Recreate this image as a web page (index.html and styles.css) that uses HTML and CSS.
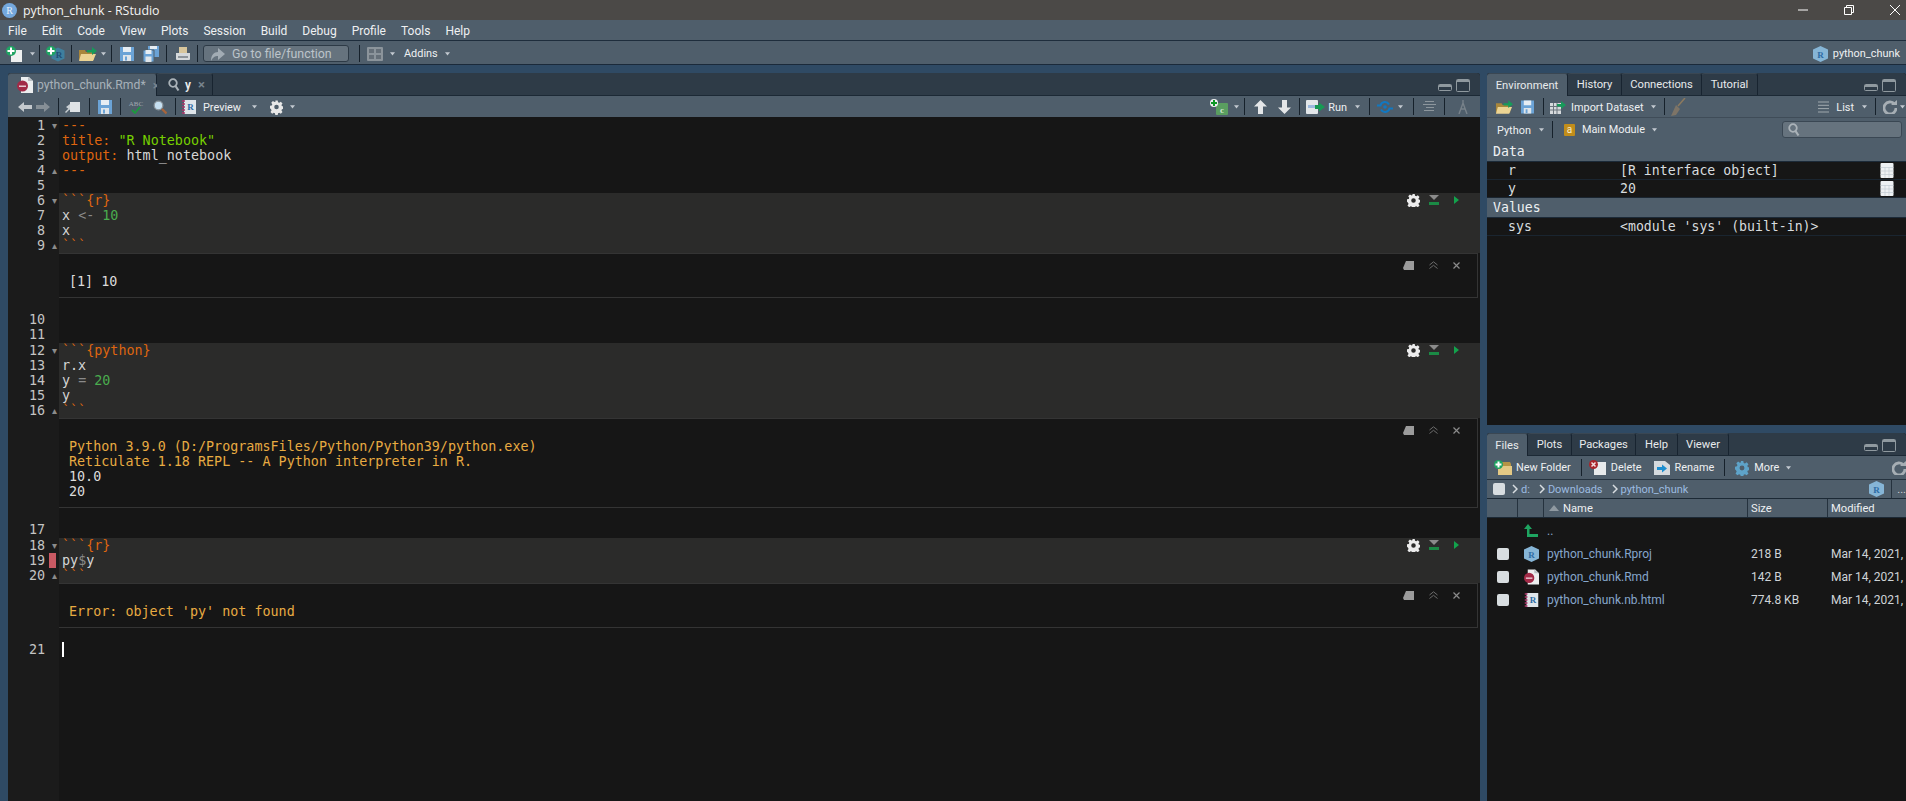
FILE: index.html
```html
<!DOCTYPE html>
<html lang="en">
<head>
<meta charset="utf-8">
<title>python_chunk - RStudio</title>
<link rel="stylesheet" href="styles.css">
</head>
<body>
<svg class="defs" aria-hidden="true">
  <symbol id="caret" viewBox="0 0 7 4"><path d="M1 .3h5L3.500 3.500z" fill="#c3cad0"/></symbol>
  <symbol id="docplus" viewBox="0 0 17 16"><path d="M5 4h11v12H5z" fill="#eef0f0"/><circle cx="5" cy="5" r="5" fill="#1fa463"/><path d="M4 1.500h2V4h2.500v2H6v2.500H4V6H1.500V4H4z" fill="#fff"/></symbol>
  <symbol id="projplus" viewBox="0 0 19 16"><path d="M12 1.500l6.500 3v8l-6.500 3-6.500-3v-8z" fill="#3f7f9e"/><circle cx="5" cy="5" r="5" fill="#1fa463"/><path d="M4 1.500h2V4h2.500v2H6v2.500H4V6H1.500V4H4z" fill="#fff"/></symbol>
  <symbol id="open" viewBox="0 0 19 16"><path d="M1 4h6l1 2h8v8H1z" fill="#a9873c"/><path d="M3 8h15l-3 7H1z" fill="#ecd493"/><path d="M9 4h5V1l5 4-5 4V6.500H9z" fill="#179a5a"/></symbol>
  <symbol id="save" viewBox="0 0 14 16"><path d="M0 1h14v14H0z" fill="#6ba3d6"/><path d="M3 1h8v5H3z" fill="#e6edf3"/><path d="M3 9h8v6H3z" fill="#dfe5ea"/><path d="M5 10.500h2v4H5z" fill="#6ba3d6"/></symbol>
  <symbol id="saveall" viewBox="0 0 16 16"><path d="M5 0h11v11H5z" fill="#6ba3d6"/><path d="M7 0h7v3H7z" fill="#e6edf3"/><path d="M0 4h11v12H0z" fill="#6ba3d6" stroke="#4f5e6b"/><path d="M2.500 4h6v4h-6z" fill="#e6edf3"/><path d="M2.500 10.500h6V16h-6z" fill="#dfe5ea"/></symbol>
  <symbol id="print" viewBox="0 0 16 16"><path d="M4 1h8v6H4z" fill="#d8c69c"/><path d="M1 7h14v6a1 1 0 0 1-1 1H2a1 1 0 0 1-1-1z" fill="#d4d8da"/><path d="M3 10h10v2H3z" fill="#8d9499"/></symbol>
  <symbol id="goto" viewBox="0 0 14 14"><path d="M0 14C0 8 3 5 7 5V1l7 6-7 6V9c-3 0-5 1-7 5z" fill="#a2acb4"/></symbol>
  <symbol id="grid" viewBox="0 0 16 14"><rect width="16" height="14" rx="1" fill="#8b949b"/><path d="M2 2h5v4H2zM9 2h5v4H9zM2 8h5v4H2zM9 8h5v4H9z" fill="#656f78"/></symbol>
  <symbol id="back" viewBox="0 0 14 10"><path d="M0 5l6-5v3h8v4H6v3z" fill="#c4c9cd"/></symbol>
  <symbol id="fwd" viewBox="0 0 14 10"><path d="M14 5L8 0v3H0v4h8v3z" fill="#868f96"/></symbol>
  <symbol id="newwin" viewBox="0 0 15 12"><path d="M5 1h10v10H5z" fill="#dfe3e6"/><path d="M1 6l4-3v6zM0 11l4-4 1 1-4 4z" fill="#c8ced2"/></symbol>
  <symbol id="check-green" viewBox="0 0 18 16"><path d="M5 11l3 3 5-6" fill="none" stroke="#1b9a3d" stroke-width="1.800"/></symbol>
  <symbol id="mag" viewBox="0 0 14 14"><circle cx="5.500" cy="5.500" r="4.300" fill="#c6e0f2" stroke="#8d979e" stroke-width="1.300"/><path d="M9 9l4.500 4.500" stroke="#a8643a" stroke-width="2.300"/></symbol>
  <symbol id="nb" viewBox="0 0 14 16"><path d="M2 1h12v14H2z" fill="#dfe5ea"/><path d="M0 2h3M0 5h3M0 8h3M0 11h3M0 14h3" stroke="#b0346a" stroke-width="1.500"/></symbol>
  <symbol id="gear" viewBox="0 0 16 16"><path fill="currentColor" fill-rule="evenodd" d="M6.500 0h3l.4 2.200 1.500.6 1.900-1.300 2.100 2.100-1.300 1.900.6 1.500 2.300.4v3l-2.300.4-.6 1.500 1.300 1.900-2.100 2.100-1.900-1.300-1.500.6-.4 2.300h-3l-.4-2.300-1.500-.6-1.900 1.300-2.100-2.100 1.300-1.900-.6-1.500L0 9.500v-3l2.200-.4.6-1.500L1.500 2.700l2.100-2.100 1.900 1.300 1.500-.6zM8 5.200a2.800 2.800 0 1 0 0 5.600 2.800 2.800 0 0 0 0-5.600z"/></symbol>
  <symbol id="cplus" viewBox="0 0 18 16"><rect x="6" y="4" width="12" height="12" rx="1" fill="#5a9e60"/><circle cx="4" cy="4" r="4" fill="#eef0f0"/><path d="M3 1h2v2h2v2H5v2H3V5H1V3h2z" fill="#0f9a25"/></symbol>
  <symbol id="up" viewBox="0 0 13 14"><path d="M6.500 0L13 6.500H9V14H4V6.500H0z" fill="#e4e6e8"/></symbol>
  <symbol id="down" viewBox="0 0 13 14"><path d="M6.500 14L13 7.500H9V0H4v7.500H0z" fill="#e4e6e8"/></symbol>
  <symbol id="run" viewBox="0 0 19 14"><path d="M0 1a1 1 0 0 1 1-1h10a1 1 0 0 1 1 1v12a1 1 0 0 1-1 1H1a1 1 0 0 1-1-1z" fill="#e3e7ea"/><path d="M2 5h8v3H2z" fill="#9cb9df"/><path d="M9 5h4V2.500L19 7l-6 4.500V9H9z" fill="#169a54"/></symbol>
  <symbol id="sync" viewBox="0 0 16 14"><path d="M0 5.500h3.500a4.600 4.600 0 0 1 8.500-1M16 8.500h-3.500a4.600 4.600 0 0 1-8.500 1" fill="none" stroke="#1178c2" stroke-width="2"/><circle cx="8" cy="7" r="1.800" fill="#1178c2"/></symbol>
  <symbol id="lines" viewBox="0 0 13 12"><path d="M2 .5h9M0 3.500h13M3 6.500h8M1 9.500h10" stroke="#8d969d" stroke-width="1"/></symbol>
  <symbol id="compass" viewBox="0 0 10 14"><path d="M5 0v3M1 14l4-11 4 11M2.500 9h5" fill="none" stroke="#78828a" stroke-width="1.400"/></symbol>
  <symbol id="min" viewBox="0 0 14 7"><rect x=".5" y=".5" width="13" height="6" rx="1" fill="none" stroke="#8f999f"/><path d="M1 1h12v2H1z" fill="#8f999f"/></symbol>
  <symbol id="max" viewBox="0 0 14 13"><rect x=".5" y=".5" width="13" height="12" rx="1" fill="none" stroke="#8f999f"/><path d="M1 1h12v2H1z" fill="#8f999f"/></symbol>
  <symbol id="runabove" viewBox="0 0 10 10"><path d="M0 0h10L5 5z" fill="#8b8b8b"/><path d="M0 7h10v3H0z" fill="#1b8a45"/></symbol>
  <symbol id="play" viewBox="0 0 5 8"><path d="M0 0l5 4-5 4z" fill="#12a24c"/></symbol>
  <symbol id="popout" viewBox="0 0 11 9"><path d="M3 0h8v9H1L0 7z" fill="#9b9b9b"/></symbol>
  <symbol id="chev" viewBox="0 0 9 8"><path d="M.5 4L4.500 .8 8.500 4M.5 7.500l4-3.200 4 3.200" fill="none" stroke="#6d6d6d"/></symbol>
  <symbol id="close" viewBox="0 0 7 7"><path d="M.5 .5l6 6M6.500 .5l-6 6" stroke="#8b8b8b" stroke-width="1.200"/></symbol>
  <symbol id="folder" viewBox="0 0 18 15"><path d="M4 2h12l1 2v11H4z" fill="#b69445"/><path d="M4 6h14v9H4z" fill="#e4c985"/><circle cx="4.500" cy="4.500" r="4.500" fill="#1fa463"/><path d="M3.500 1.500h2v2h2v2h-2v2h-2v-2h-2v-2h2z" fill="#fff"/></symbol>
  <symbol id="del" viewBox="0 0 17 15"><path d="M5 2h12v13H5z" fill="#e8eaeb"/><circle cx="4.500" cy="4.500" r="4.500" fill="#a9262b"/><path d="M2.500 2.500l4 4M6.500 2.500l-4 4" stroke="#f2e0e0" stroke-width="1.500"/></symbol>
  <symbol id="rename" viewBox="0 0 16 14"><path d="M0 0h11l5 4v10H0z" fill="#d5dade"/><path d="M3 6h5V3.500l5 4-5 4V9H3z" fill="#1c8ed0"/></symbol>
  <symbol id="import" viewBox="0 0 16 14"><path d="M0 3h11v11H0z" fill="#d6dadd"/><path d="M0 6.500h11M0 10h11M3.500 3v11M7 3v11" stroke="#6a747c"/><path d="M7 4h4V1l5 4-5 4V6.500H7z" fill="#179a5a"/></symbol>
  <symbol id="broom" viewBox="0 0 15 18"><path d="M14 0L7 8" stroke="#8d7a5e" stroke-width="1.500"/><path d="M5 7l4 4-4 6-5 1z" fill="#7d7467"/></symbol>
  <symbol id="listl" viewBox="0 0 11 12"><path d="M0 1h11M0 4.300h11M0 7.600h11M0 11h11" stroke="#a0a8ae"/></symbol>
  <symbol id="refresh" viewBox="0 0 14 14"><path d="M11.500 4A6 6 0 1 0 13 8" fill="none" stroke="#a6aeb4" stroke-width="2.800"/><path d="M8 5h6V0z" fill="#a6aeb4"/></symbol>
  <symbol id="search" viewBox="0 0 12 14"><circle cx="5" cy="5" r="3.800" fill="none" stroke="#aab2b8" stroke-width="1.800"/><path d="M7.500 8l3 4.500" stroke="#aab2b8" stroke-width="2.200"/></symbol>
  <symbol id="table" viewBox="0 0 13 15"><path d="M1 0h11a1 1 0 0 1 1 1v13a1 1 0 0 1-1 1H1a1 1 0 0 1-1-1V1a1 1 0 0 1 1-1z" fill="#eef1f3"/><path d="M0 4.500h13M0 8h13M0 11.500h13M4.500 4v11M8.500 4v11" stroke="#c3ccd3" stroke-width=".7"/></symbol>
  <symbol id="hex" viewBox="0 0 15 16"><path d="M7.500 0L15 3.500v9L7.500 16 0 12.500v-9z" fill="#86b5d6"/></symbol>
  <symbol id="rmd" viewBox="0 0 16 16"><path d="M4 0h8l4 4v12H4z" fill="#eceeef"/><path d="M11 0l5 4h-5z" fill="#b9bec2"/><circle cx="5.500" cy="9" r="5.500" fill="#a22a47"/><path d="M2 8.500h7v1.500H2z" fill="#e8c9d2"/></symbol>
  <symbol id="upg" viewBox="0 0 14 13"><path d="M4 0l4 5H5.500v5H14v3H3V5H0z" fill="#1ea561"/></symbol>
  <symbol id="chevr" viewBox="0 0 6 10"><path d="M1 1l4 4-4 4" fill="none" stroke="#d8dde1" stroke-width="1.500"/></symbol>
  <symbol id="win-min" viewBox="0 0 10 10"><path d="M0 5h10" stroke="#fff"/></symbol>
  <symbol id="win-res" viewBox="0 0 10 10"><path d="M.5 2.500h7v7h-7zM2.500 2.500v-2h7v7h-2" fill="none" stroke="#fff"/></symbol>
  <symbol id="win-x" viewBox="0 0 10 10"><path d="M0 0l10 10M10 0L0 10" stroke="#fff"/></symbol>
</svg>

<div class="app">
  <header class="titlebar">
    <span class="rlogo">R</span>
    <span class="title">python_chunk - RStudio</span>
    <span class="grow"></span>
    <svg class="wc"><use href="#win-min"/></svg>
    <svg class="wc wc-res"><use href="#win-res"/></svg>
    <svg class="wc wc-x"><use href="#win-x"/></svg>
  </header>
  <nav class="menubar">
    <span>File</span><span>Edit</span><span>Code</span><span>View</span><span>Plots</span><span>Session</span><span>Build</span><span>Debug</span><span>Profile</span><span>Tools</span><span>Help</span>
  </nav>
  <div class="globalbar bar">
    <svg class="ic w17 m6"><use href="#docplus"/></svg><svg class="caret m6"><use href="#caret"/></svg><i class="sep m3"></i>
    <svg class="ic w19 m6" viewBox="0 0 19 16"><use href="#projplus"/><text x="13" y="12" class="svgr fill-dark">R</text></svg><i class="sep m6"></i>
    <svg class="ic w19 m6"><use href="#open"/></svg><svg class="caret m3"><use href="#caret"/></svg><i class="sep m4"></i>
    <svg class="ic w14 m8"><use href="#save"/></svg><svg class="ic w16 m9"><use href="#saveall"/></svg><i class="sep m7"></i>
    <svg class="ic w16 m8"><use href="#print"/></svg><i class="sep m6"></i>
    <div class="gotobox m5"><svg class="ic w14"><use href="#goto"/></svg><span>Go to file/function</span></div><i class="sep m10"></i>
    <svg class="ic w16 m7"><use href="#grid"/></svg><svg class="caret m6"><use href="#caret"/></svg>
    <span class="lbl m8">Addins</span><svg class="caret m6"><use href="#caret"/></svg>
    <span class="grow"></span>
    <svg class="ic w15" viewBox="0 0 15 16"><use href="#hex"/><text x="7.500" y="12" class="svgr fill-blue">R</text></svg><span class="lbl m5 endlbl">python_chunk</span>
  </div>

  <main class="workspace">
    <section class="pane source">
      <div class="tabs">
        <div class="tab active tab-rmd"><svg class="ic w16"><use href="#rmd"/></svg><span class="dim">python_chunk.Rmd*</span><span class="x">×</span></div>
        <div class="tab tab-find"><svg class="ic w14 magtab"><use href="#search"/></svg><b>y</b><span class="x">×</span></div>
        <span class="grow"></span>
        <svg class="pc-min"><use href="#min"/></svg><svg class="pc-max"><use href="#max"/></svg>
      </div>
      <div class="bar srcbar">
        <svg class="ic w14 m10 h10"><use href="#back"/></svg><svg class="ic w14 m4 h10"><use href="#fwd"/></svg><i class="sep m8"></i>
        <svg class="ic w15 m6 h12"><use href="#newwin"/></svg><i class="sep m9"></i>
        <svg class="ic w14 m8"><use href="#save"/></svg><i class="sep m8"></i>
        <svg class="ic w18 m6" viewBox="0 0 18 16"><use href="#check-green"/><text x="9" y="6.500" class="svgabc">ABC</text></svg><svg class="ic w14 m8"><use href="#mag"/></svg><i class="sep m8"></i>
        <svg class="ic w14 m6" viewBox="0 0 14 16"><use href="#nb"/><text x="8.500" y="11" class="svgr fill-blue">R</text></svg><span class="lbl m7">Preview</span><svg class="caret m10"><use href="#caret"/></svg>
        <svg class="ic w13 m12 gearw"><use href="#gear"/></svg><svg class="caret m6"><use href="#caret"/></svg>
        <span class="grow"></span>
        <svg class="ic w18" viewBox="0 0 18 16"><use href="#cplus"/><text x="12" y="13.500" class="svgr fill-pale">c</text></svg><svg class="caret m5"><use href="#caret"/></svg><i class="sep m4"></i>
        <svg class="ic w13 m9"><use href="#up"/></svg><svg class="ic w13 m11"><use href="#down"/></svg><i class="sep m8"></i>
        <svg class="ic w19 m6 h14"><use href="#run"/></svg><span class="lbl m3">Run</span><svg class="caret m7"><use href="#caret"/></svg><i class="sep m8"></i>
        <svg class="ic w16 m7 h14"><use href="#sync"/></svg><svg class="caret m4"><use href="#caret"/></svg><i class="sep m9"></i>
        <svg class="ic w13 m9 h12"><use href="#lines"/></svg><i class="sep m8"></i>
        <svg class="ic w10 m13 h14"><use href="#compass"/></svg>
        <span class="end12"></span>
      </div>
      <div class="editor">
        <div class="gap g1"><span class="ln"></span></div>
        <div class="line"><span class="ln">1<em class="fold">▾</em></span><code><span class="o">---</span></code></div>
        <div class="line"><span class="ln">2</span><code><span class="o">title:</span> <span class="s">"R Notebook"</span></code></div>
        <div class="line"><span class="ln">3</span><code><span class="o">output:</span> html_notebook</code></div>
        <div class="line"><span class="ln">4<em class="fold">▴</em></span><code><span class="o">---</span></code></div>
        <div class="line"><span class="ln">5</span><code></code></div>
        <div class="line chunk"><span class="ln">6<em class="fold">▾</em></span><code><span class="o">```{r}</span></code>
          <div class="chunkctl"><svg class="cc-gear"><use href="#gear"/></svg><svg class="cc-ra"><use href="#runabove"/></svg><svg class="cc-play"><use href="#play"/></svg></div></div>
        <div class="line chunk"><span class="ln">7</span><code>x <span class="g">&lt;-</span> <span class="n">10</span></code></div>
        <div class="line chunk"><span class="ln">8</span><code>x</code></div>
        <div class="line chunk"><span class="ln">9<em class="fold">▴</em></span><code><span class="o">```</span></code></div>
        <div class="out out45"><span class="ln"></span><div class="outbox"><div class="outctl"><svg class="oc-pop"><use href="#popout"/></svg><svg class="oc-chev"><use href="#chev"/></svg><svg class="oc-x"><use href="#close"/></svg></div><pre class="outtext plain">[1] 10</pre></div></div>
        <div class="gap g14"><span class="ln"></span></div>
        <div class="line"><span class="ln">10</span><code></code></div>
        <div class="line"><span class="ln">11</span><code></code></div>
        <div class="gap g1"><span class="ln"></span></div>
        <div class="line chunk"><span class="ln">12<em class="fold">▾</em></span><code><span class="o">```{python}</span></code>
          <div class="chunkctl"><svg class="cc-gear"><use href="#gear"/></svg><svg class="cc-ra"><use href="#runabove"/></svg><svg class="cc-play"><use href="#play"/></svg></div></div>
        <div class="line chunk"><span class="ln">13</span><code>r.x</code></div>
        <div class="line chunk"><span class="ln">14</span><code>y <span class="g">=</span> <span class="n">20</span></code></div>
        <div class="line chunk"><span class="ln">15</span><code>y</code></div>
        <div class="line chunk"><span class="ln">16<em class="fold">▴</em></span><code><span class="o">```</span></code></div>
        <div class="out out90"><span class="ln"></span><div class="outbox"><div class="outctl"><svg class="oc-pop"><use href="#popout"/></svg><svg class="oc-chev"><use href="#chev"/></svg><svg class="oc-x"><use href="#close"/></svg></div><pre class="outtext warn">Python 3.9.0 (D:/ProgramsFiles/Python/Python39/python.exe)
Reticulate 1.18 REPL -- A Python interpreter in R.
<span class="plain">10.0
20</span></pre></div></div>
        <div class="gap g14"><span class="ln"></span></div>
        <div class="line"><span class="ln">17</span><code></code></div>
        <div class="gap g1"><span class="ln"></span></div>
        <div class="line chunk"><span class="ln">18<em class="fold">▾</em></span><code><span class="o">```{r}</span></code>
          <div class="chunkctl"><svg class="cc-gear"><use href="#gear"/></svg><svg class="cc-ra"><use href="#runabove"/></svg><svg class="cc-play"><use href="#play"/></svg></div></div>
        <div class="line chunk"><span class="ln">19<em class="mark"></em></span><code>py<span class="g">$</span>y</code></div>
        <div class="line chunk"><span class="ln">20<em class="fold">▴</em></span><code><span class="o">```</span></code></div>
        <div class="out out45"><span class="ln"></span><div class="outbox"><div class="outctl"><svg class="oc-pop"><use href="#popout"/></svg><svg class="oc-chev"><use href="#chev"/></svg><svg class="oc-x"><use href="#close"/></svg></div><pre class="outtext warn">Error: object 'py' not found</pre></div></div>
        <div class="gap g14"><span class="ln"></span></div>
        <div class="line"><span class="ln">21</span><code><i class="cursor"></i></code></div>
        <div class="fill"><span class="ln"></span></div>
      </div>
    </section>

    <div class="rightcol">
      <section class="pane env">
        <div class="tabs">
          <div class="tab active t-env">Environment</div>
          <div class="tab t-hist">History</div>
          <div class="tab t-conn">Connections</div>
          <div class="tab t-tut">Tutorial</div>
          <span class="grow"></span>
          <svg class="pc-min"><use href="#min"/></svg><svg class="pc-max"><use href="#max"/></svg>
        </div>
        <div class="bar envbar">
          <svg class="ic w18 m8"><use href="#open"/></svg><svg class="ic w13 m8"><use href="#save"/></svg><i class="sep m9"></i>
          <svg class="ic w16 m6 h14"><use href="#import"/></svg><span class="lbl m5">Import Dataset</span><svg class="caret m6"><use href="#caret"/></svg><i class="sep m7"></i>
          <svg class="ic w15 m6 h18"><use href="#broom"/></svg>
          <span class="grow"></span>
          <svg class="ic w11 h12"><use href="#listl"/></svg><span class="lbl m7">List</span><svg class="caret m7"><use href="#caret"/></svg><i class="sep m7"></i>
          <svg class="ic w14 m7 h14"><use href="#refresh"/></svg><svg class="caret m2"><use href="#caret"/></svg>
        </div>
        <div class="bar envbar2">
          <span class="lbl m10">Python</span><svg class="caret m7"><use href="#caret"/></svg><i class="sep m7"></i>
          <span class="abox m11">a</span><span class="lbl m7">Main Module</span><svg class="caret m6"><use href="#caret"/></svg>
          <span class="grow"></span>
          <div class="searchbox"><svg class="searchic"><use href="#search"/></svg></div>
        </div>
        <div class="envtable">
          <div class="envhead h21">Data</div>
          <div class="envrow"><span>r</span><span>[R interface object]</span><svg class="tbl"><use href="#table"/></svg></div>
          <div class="envrow"><span>y</span><span>20</span><svg class="tbl"><use href="#table"/></svg></div>
          <div class="envhead h20">Values</div>
          <div class="envrow"><span>sys</span><span>&lt;module 'sys' (built-in)&gt;</span></div>
        </div>
      </section>

      <section class="pane files">
        <div class="tabs">
          <div class="tab active t-files">Files</div>
          <div class="tab t-plots">Plots</div>
          <div class="tab t-pack">Packages</div>
          <div class="tab t-help">Help</div>
          <div class="tab t-view">Viewer</div>
          <span class="grow"></span>
          <svg class="pc-min"><use href="#min"/></svg><svg class="pc-max"><use href="#max"/></svg>
        </div>
        <div class="bar filebar">
          <svg class="ic w18 m7 h15"><use href="#folder"/></svg><span class="lbl m4">New Folder</span><i class="sep m10"></i>
          <svg class="ic w17 m7 h15"><use href="#del"/></svg><span class="lbl m5">Delete</span>
          <svg class="ic w16 m12 h14"><use href="#rename"/></svg><span class="lbl m5">Rename</span><i class="sep m10"></i>
          <svg class="ic w14 m10 gearb"><use href="#gear"/></svg><span class="lbl m5">More</span><svg class="caret m6"><use href="#caret"/></svg>
          <span class="grow"></span>
          <svg class="ic w14 h14"><use href="#refresh"/></svg>
        </div>
        <div class="pathbar">
          <i class="check m6"></i>
          <svg class="chevr m7"><use href="#chevr"/></svg><span class="plink m3">d:</span>
          <svg class="chevr m9"><use href="#chevr"/></svg><span class="plink m3">Downloads</span>
          <svg class="chevr m9"><use href="#chevr"/></svg><span class="plink m3">python_chunk</span>
          <span class="grow"></span>
          <svg class="ic w15" viewBox="0 0 15 16"><use href="#hex"/><text x="7.500" y="12" class="svgr fill-blue">R</text></svg><i class="vline m7"></i><span class="dots m5">...</span>
        </div>
        <div class="fgrid fhead">
          <span></span><span></span><span class="hname"><i class="sortup"></i>Name</span><span>Size</span><span>Modified</span>
        </div>
        <div class="fgrid frow row-parent"><span></span><svg class="ic w14 h13 fi"><use href="#upg"/></svg><a class="fname">..</a><span></span><span></span></div>
        <div class="fgrid frow"><i class="check cellc"></i><svg class="ic w15 fi" viewBox="0 0 15 16"><use href="#hex"/><text x="7.500" y="12" class="svgr fill-blue">R</text></svg><a class="fname">python_chunk.Rproj</a><span class="fsz">218 B</span><span class="fdt">Mar 14, 2021,</span></div>
        <div class="fgrid frow"><i class="check cellc"></i><svg class="ic w15 fi"><use href="#rmd"/></svg><a class="fname">python_chunk.Rmd</a><span class="fsz">142 B</span><span class="fdt">Mar 14, 2021,</span></div>
        <div class="fgrid frow"><i class="check cellc"></i><svg class="ic w15 fi" viewBox="0 0 14 16"><use href="#nb"/><text x="8.500" y="11" class="svgr fill-blue">R</text></svg><a class="fname">python_chunk.nb.html</a><span class="fsz">774.8 KB</span><span class="fdt">Mar 14, 2021,</span></div>
      </section>
    </div>
  </main>
</div>
</body>
</html>
```

FILE: styles.css
```css
* { box-sizing: border-box; }
html, body { margin: 0; height: 100%; overflow: hidden; }
body { font-family: Roboto, "Open Sans", sans-serif; font-size: 11.200px; color: #e8eaec; background: #2f4a64; }
.defs { position: absolute; width: 0; height: 0; }
.svgr { font: bold 9px "Liberation Serif", serif; text-anchor: middle; }
.svgabc { font: 7px "Liberation Serif", serif; text-anchor: middle; fill: #a0a9af; }
.fill-dark { fill: #1f4f74; }
.fill-blue { fill: #2e6ca5; }
.fill-pale { fill: #d6e8d6; }
.app { display: flex; flex-direction: column; width: 1906px; height: 801px; }
.grow { flex: 1; }

/* window chrome */
.titlebar { height: 20px; flex: none; background: #4b4947; display: flex; align-items: center; padding-left: 2px; color: #f4f4f4; }
.rlogo { width: 15px; height: 15px; border-radius: 50%; background: #75a8dc; color: #e6f0fa; font: 10px/15px "Liberation Serif", serif; text-align: center; }
.title { margin-left: 6px; font-family: "Open Sans", sans-serif; font-size: 12.400px; }
.wc { width: 10px; height: 10px; }
.wc-res { margin-left: 36px; }
.wc-x { margin-left: 36px; margin-right: 6px; }
.menubar { height: 20px; flex: none; background: #4f5e6b; display: flex; align-items: center; gap: 15px; padding: 1px 0 0 8px; font-size: 12px; color: #eef0f2; }

.bar { display: flex; align-items: center; background: #4f5e6b; flex: none; }
.globalbar { height: 25px; padding-top: 2px; border-top: 1px solid #1e2d3c; border-bottom: 1px solid #1b2a3a; }
.ic { flex: none; width: 16px; height: 16px; display: block; }
.w10 { width: 10px; } .w11 { width: 11px; } .w13 { width: 13px; } .w14 { width: 14px; } .w15 { width: 15px; } .w16 { width: 16px; } .w17 { width: 17px; } .w18 { width: 18px; } .w19 { width: 19px; }
.h10 { height: 10px; } .h12 { height: 12px; } .h13 { height: 13px; } .h14 { height: 14px; } .h15 { height: 15px; } .h18 { height: 18px; }
.caret { flex: none; width: 7px; height: 4px; display: block; }
.sep { flex: none; display: block; width: 1px; height: 17px; background: #16212b; }
.lbl { white-space: nowrap; color: #eef0f2; font-size: 10.900px; }
.srcbar .lbl, .envbar .lbl, .envbar2 .lbl:first-child { padding-top: 2px; }
.endlbl { margin-right: 6px; }
.end12 { width: 12px; flex: none; }
.m2 { margin-left: 2px; } .m3 { margin-left: 3px; } .m4 { margin-left: 4px; } .m5 { margin-left: 5px; } .m6 { margin-left: 6px; } .m7 { margin-left: 7px; } .m8 { margin-left: 8px; } .m9 { margin-left: 9px; } .m10 { margin-left: 10px; } .m11 { margin-left: 11px; } .m12 { margin-left: 12px; } .m13 { margin-left: 13px; }
.gotobox { width: 146px; height: 17px; border: 1px solid #2d3a46; border-radius: 3px; background: #66737e; display: flex; align-items: center; padding-left: 7px; gap: 7px; color: #bcc4ca; font-size: 12.400px; }
.gotobox .ic { height: 14px; }

/* workspace */
.workspace { flex: 1; min-height: 0; display: flex; padding: 8px 0 0 8px; gap: 7px; }
.pane { display: flex; flex-direction: column; overflow: hidden; background: #161616; border-radius: 3px 3px 0 0; }
.source { width: 1472px; }
.rightcol { flex: 1; min-width: 0; display: flex; flex-direction: column; gap: 8px; }
.env { height: 352px; flex: none; }
.files { flex: 1; min-height: 0; }

.tabs { height: 23px; flex: none; background: #2e3b47; display: flex; align-items: flex-end; border-bottom: 1px solid #1c2935; position: relative; }
.tab { height: 22px; background: #2e3b47; border-right: 1px solid #182430; border-top: 1px solid #3a4753; border-radius: 3px 3px 0 0; display: flex; align-items: center; justify-content: center; flex: none; color: #e8eaec; white-space: nowrap; }
.tab.active { background: #4f5e6b; height: 23px; margin-bottom: -1px; }
.tab-rmd { width: 149px; justify-content: flex-start; padding-left: 9px; gap: 4px; font-size: 12.200px; }
.tab-find { width: 56px; justify-content: flex-start; padding-left: 10px; gap: 4px; }
.magtab { height: 14px; }
.dim { color: #a7b1b9; }
.x { color: #78848e; font-size: 13px; margin-left: 3px; font-weight: 600; }
.tab-find b { font-weight: 600; font-size: 12px; }
.pc-min { width: 14px; height: 7px; margin: 0 4px 4px 0; flex: none; }
.pc-max { width: 14px; height: 13px; margin: 0 10px 3px 0; flex: none; }
.srcbar { height: 21px; }
.gearw { color: #e8e8e8; }
.gearb { color: #5ea3c9; }

/* editor */
.editor { flex: 1; min-height: 0; display: flex; flex-direction: column; background: #161616; font-family: "DejaVu Sans Mono", monospace; font-size: 13.400px; }
.ln { width: 51px; flex: none; background: #1b1b1b; color: #c4c4c4; display: block; text-align: right; padding-right: 14px; position: relative; line-height: 15px; }
.line { height: 15px; flex: none; display: flex; position: relative; line-height: 15px; color: #d6d6d6; }
.line code { font: inherit; padding-left: 3px; white-space: pre; flex: 1; }
.chunk { background: #2b2b2a; }
.o { color: #df650f; }
.s { color: #76d000; }
.n { color: #4aac4e; }
.g { color: #8a8a8a; }
.fold { position: absolute; right: 2px; top: 0; font-style: normal; font-size: 10px; color: #8b8b8b; font-family: "DejaVu Sans", sans-serif; }
.mark { position: absolute; left: 41px; top: 0; width: 7px; height: 15px; background: #c95a64; }
.chunkctl { position: absolute; right: 0; top: 0; height: 15px; }
.cc-gear { position: absolute; right: 60px; top: 1px; width: 13px; height: 13px; color: #ececec; }
.cc-ra { position: absolute; right: 41px; top: 2px; width: 10px; height: 10px; }
.cc-play { position: absolute; right: 21px; top: 3px; width: 5px; height: 8px; }
.out { flex: none; display: flex; }
.out45 { height: 45px; }
.out90 { height: 90px; }
.outbox { flex: 1; margin-right: 2px; border: 1px solid #343434; border-width: 1px 1px 1px 0; position: relative; padding: 20px 0 0 10px; }
.outtext { margin: 0; font: inherit; line-height: 15px; }
.plain { color: #dcdcdc; }
.warn { color: #e8ab42; }
.outctl { position: absolute; right: 0; top: 0; left: 0; height: 20px; }
.oc-pop { position: absolute; right: 63px; top: 7px; width: 11px; height: 9px; }
.oc-chev { position: absolute; right: 39px; top: 7px; width: 9px; height: 8px; }
.oc-x { position: absolute; right: 17px; top: 8px; width: 7px; height: 7px; }
.gap { flex: none; display: flex; }
.g1 { height: 1px; } .g14 { height: 14px; }
.gap .ln, .fill .ln { height: 100%; }
.fill { flex: 1; min-height: 0; display: flex; }
.cursor { display: inline-block; width: 2px; height: 15px; background: #fff; vertical-align: top; }

/* environment */
.t-env { width: 81px; }
.t-hist { width: 54px; }
.t-conn { width: 80px; }
.t-tut { width: 56px; }
.envbar { height: 21px; }
.envbar2 { height: 24px; border-top: 1px solid #3f4c58; }
.abox { width: 11px; height: 12px; background: #c18d1a; color: #f6e9c8; font-size: 10px; line-height: 11px; text-align: center; border-radius: 1px; flex: none; }
.searchbox { width: 120px; height: 17px; margin-right: 4px; background: #66737e; border: 1px solid #3a4753; border-radius: 3px; position: relative; flex: none; }
.searchic { position: absolute; left: 5px; top: 1px; width: 12px; height: 14px; }
.envtable { font-family: "DejaVu Sans Mono", monospace; font-size: 13.200px; color: #d8dcdf; }
.envhead { background: #4f5e6b; padding-left: 6px; color: #eef0f2; border-bottom: 1px solid #1c2a38; display: flex; align-items: center; }
.h21 { height: 21px; } .h20 { height: 20px; }
.envrow { height: 18px; display: grid; grid-template-columns: 112px 1fr 14px; padding: 0 12px 0 21px; align-items: center; border-bottom: 1px solid #1a2530; }
.tbl { width: 14px; height: 15px; display: block; }

/* files */
.t-files { width: 41px; }
.t-plots { width: 44px; }
.t-pack { width: 64px; }
.t-help { width: 42px; }
.t-view { width: 51px; }
.filebar { height: 23px; }
.pathbar { height: 20px; flex: none; display: flex; align-items: center; background: #4f5e6b; border-top: 1px solid #25323e; border-bottom: 1px solid #1c2935; overflow: hidden; font-size: 11px; }
.check { flex: none; display: block; width: 12px; height: 12px; background: #d8dde0; border-radius: 2px; }
.chevr { width: 6px; height: 10px; flex: none; }
.plink { color: #9cbbe0; white-space: nowrap; }
.vline { width: 1px; height: 20px; background: #25323e; display: block; flex: none; }
.dots { color: #cfd4d8; }
.fgrid { display: grid; grid-template-columns: 30px 26px 204px 80px 79px; flex: none; align-items: center; white-space: nowrap; overflow: hidden; }
.fhead { height: 19px; background: #4f5e6b; border-bottom: 1px solid #1c2935; color: #eef0f2; }
.fhead span { height: 100%; border-left: 1px solid #25323e; padding-left: 3px; display: flex; align-items: center; }
.fhead span:first-child { border-left: 0; }
.hname { gap: 4px; }
.sortup { width: 0; height: 0; border: 5px solid transparent; border-bottom: 6px solid #8f99a1; border-top: 0; margin-left: 2px; }
.frow { height: 23px; color: #cfd4d8; font-size: 12px; }
.row-parent { margin-top: 1px; }
.cellc { margin-left: 10px; }
.fi { margin-left: 7px; }
.fname { color: #86a6cc; padding-left: 4px; }
.fsz { padding-left: 4px; }
.fdt { padding-left: 4px; }
```
